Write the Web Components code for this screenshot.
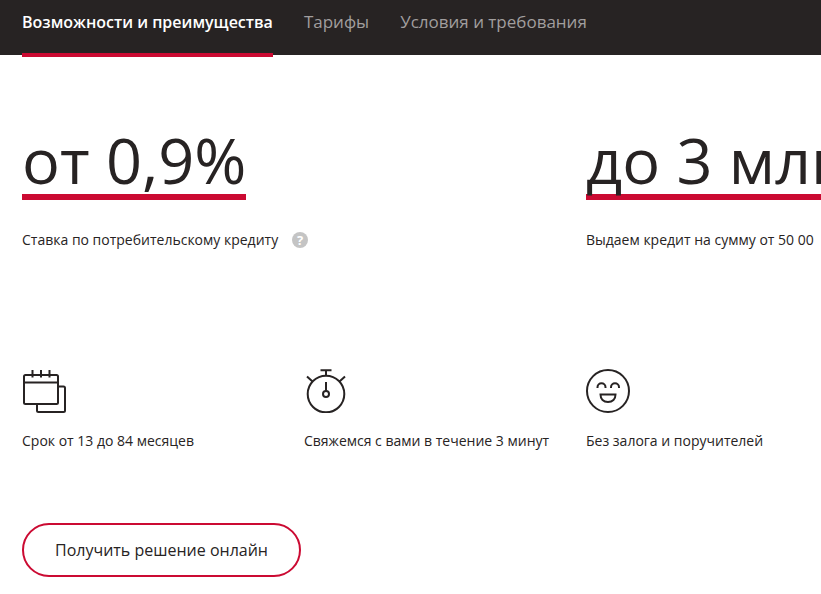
<!DOCTYPE html>
<html lang="ru">
<head>
<meta charset="utf-8">
<meta name="viewport" content="width=device-width, initial-scale=1">
<title>Потребительский кредит</title>
<style>
  :root {
    --dark: #272323;
    --accent: #cb0a32;
    --muted: #a19e9e;
  }

  body {
    margin: 0;
    overflow-x: hidden;
    background: #fff;
    color: var(--dark);
    font-family: "Open Sans", "Noto Sans", sans-serif;
  }
</style>
</head>
<body>
<credit-page></credit-page>

<script>
class TabBar extends HTMLElement {
  constructor(){
    super();
    this.attachShadow({mode: "open"});
  }

  static get styles(){
    return /* css */`
      :host {
        display: block;
        background-color: var(--dark);
      }

      nav {
        height: 55px;
        display: flex;
        column-gap: 31px;
        padding: 0 22px;
      }

      a {
        box-sizing: border-box;
        height: 57px;
        padding-top: 10px;
        font-size: 17px;
        line-height: 24px;
        white-space: nowrap;
        text-decoration: none;
        color: var(--muted);
      }

      a[aria-current] {
        color: #fff;
        font-size: 16px;
        font-weight: 600;
        border-bottom: 4px solid var(--accent);
      }
    `
  }

  connectedCallback() {
    this.shadowRoot.innerHTML = /* html */`
    <style>${TabBar.styles}</style>
    <nav>
      <a href="#benefits" aria-current="page">Возможности и преимущества</a>
      <a href="#rates">Тарифы</a>
      <a href="#terms">Условия и требования</a>
    </nav>
    `
  }
}

class KeyFigure extends HTMLElement {
  constructor(){
    super();
    this.attachShadow({mode: "open"});
  }

  static get styles(){
    return /* css */`
      :host {
        display: block;
        white-space: nowrap;
      }

      .value {
        display: inline-block;
        margin: 0;
        padding-bottom: 4px;
        font-size: 63px;
        font-weight: 400;
        line-height: 60px;
        border-bottom: 6px solid var(--accent);
      }

      .note {
        display: flex;
        align-items: center;
        column-gap: 14px;
        margin: 30px 0 0;
        font-size: 14px;
        line-height: 20px;
      }
    `
  }

  connectedCallback() {
    this.shadowRoot.innerHTML = /* html */`
    <style>${KeyFigure.styles}</style>
    <h2 class="value"><slot name="value"></slot></h2>
    <p class="note"><slot></slot></p>
    `
  }
}

class HelpHint extends HTMLElement {
  constructor(){
    super();
    this.attachShadow({mode: "open"});
  }

  static get styles(){
    return /* css */`
      :host {
        display: block;
      }

      button {
        display: block;
        width: 16px;
        height: 16px;
        padding: 0;
        border: 0;
        border-radius: 50%;
        background-color: #c4c4c4;
        color: #fff;
        font: bold 13px/16px "Open Sans", sans-serif;
        text-align: center;
        cursor: pointer;
      }
    `
  }

  connectedCallback() {
    this.shadowRoot.innerHTML = /* html */`
    <style>${HelpHint.styles}</style>
    <button type="button" aria-label="Подсказка">?</button>
    `
  }
}

const ICONS = {
  calendar: `
    <rect x="2" y="6" width="34" height="29" rx="1.5"/>
    <path d="M2 13.5H36M10.5 1V8.5M19 1V8.5M27.5 1V8.5"/>
    <path d="M36 17.5H41.5Q43 17.5 43 19V41.5Q43 43 41.5 43H16.5Q15 43 15 41.5V35"/>`,
  stopwatch: `
    <circle cx="22" cy="25" r="18.3"/>
    <circle cx="22" cy="25" r="3"/>
    <path d="M16.5 1.2H27.5M22 1.2V6.5M22 13V22M3 7.5L8.5 12.5M41 7.5L35.5 12.5"/>`,
  smile: `
    <circle cx="22" cy="22" r="21"/>
    <path d="M11.5 19V18.3A4 4 0 0 1 19.5 18.3V19M25 19V18.3A4 4 0 0 1 33 18.3V19"/>
    <path d="M14.5 25.5H29.5C29.5 30 26.5 33 22 33S14.5 30 14.5 25.5Z"/>`
};

class FeatureItem extends HTMLElement {
  constructor(){
    super();
    this.attachShadow({mode: "open"});
  }

  static get styles(){
    return /* css */`
      :host {
        display: block;
      }

      svg {
        display: block;
        width: 44px;
        height: 44px;
        fill: none;
        stroke: var(--dark);
        stroke-width: 2;
      }

      p {
        margin: 18px 0 0;
        font-size: 14px;
        line-height: 20px;
        white-space: nowrap;
      }
    `
  }

  connectedCallback() {
    this.shadowRoot.innerHTML = /* html */`
    <style>${FeatureItem.styles}</style>
    <svg viewBox="0 0 44 44" aria-hidden="true">${ICONS[this.getAttribute("icon")]}</svg>
    <p><slot></slot></p>
    `
  }
}

class OutlineButton extends HTMLElement {
  constructor(){
    super();
    this.attachShadow({mode: "open"});
  }

  static get styles(){
    return /* css */`
      :host {
        display: block;
      }

      button {
        padding: 13px 31px;
        border: 2px solid var(--accent);
        border-radius: 27px;
        background: none;
        color: var(--dark);
        font-family: inherit;
        font-size: 16px;
        line-height: 24px;
        cursor: pointer;
      }
    `
  }

  connectedCallback() {
    this.shadowRoot.innerHTML = /* html */`
    <style>${OutlineButton.styles}</style>
    <button type="button"><slot></slot></button>
    `
  }
}

class CreditPage extends HTMLElement {
  constructor(){
    super();
    this.attachShadow({mode: "open"});
  }

  static get styles(){
    return /* css */`
      :host {
        display: block;
      }

      main {
        padding: 75px 22px 16px;
        overflow: hidden;
      }

      /* four tracks: a figure takes two, a feature takes one */
      .grid {
        display: grid;
        grid-template-columns: repeat(4, minmax(282px, 1fr));
      }

      key-figure {
        grid-column: span 2;
      }

      .features {
        margin-top: 119px;
      }

      outline-button {
        margin-top: 72px;
      }
    `
  }

  connectedCallback() {
    this.shadowRoot.innerHTML = /* html */`
    <style>${CreditPage.styles}</style>
    <tab-bar></tab-bar>
    <main>
      <section class="grid">
        <key-figure>
          <span slot="value">от 0,9%</span>
          <span>Ставка по потребительскому кредиту</span>
          <help-hint></help-hint>
        </key-figure>
        <key-figure>
          <span slot="value">до 3 млн</span>
          <span>Выдаем кредит на сумму от 50 00</span>
        </key-figure>
      </section>
      <section class="grid features">
        <feature-item icon="calendar">Срок от 13 до 84 месяцев</feature-item>
        <feature-item icon="stopwatch">Свяжемся с вами в течение 3 минут</feature-item>
        <feature-item icon="smile">Без залога и поручителей</feature-item>
      </section>
      <outline-button>Получить решение онлайн</outline-button>
    </main>
    `
  }
}

customElements.define('tab-bar', TabBar);
customElements.define('key-figure', KeyFigure);
customElements.define('help-hint', HelpHint);
customElements.define('feature-item', FeatureItem);
customElements.define('outline-button', OutlineButton);
customElements.define('credit-page', CreditPage);
</script>
</body>
</html>
